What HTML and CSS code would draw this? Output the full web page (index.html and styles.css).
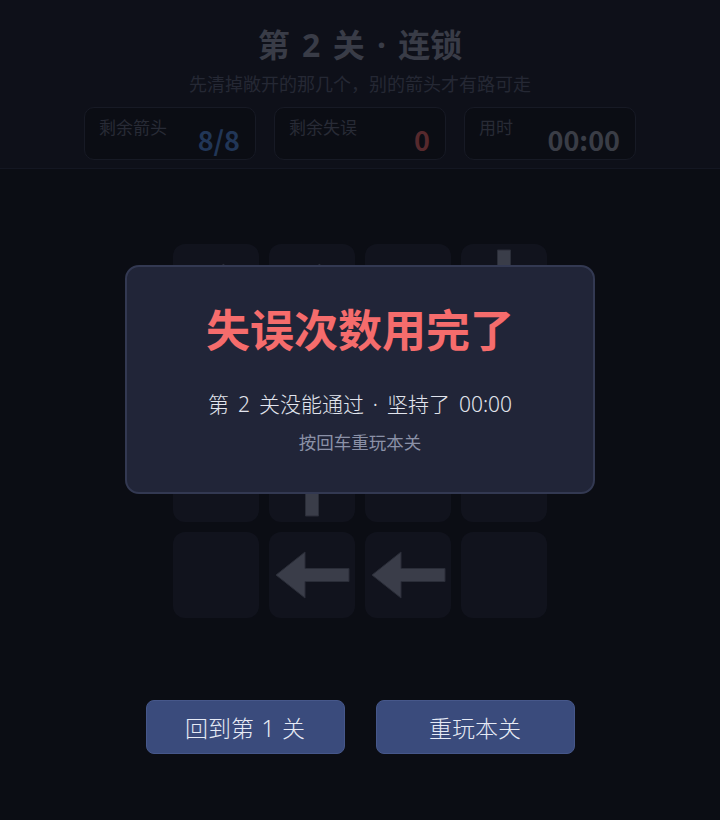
FILE: index.html
```html
<!DOCTYPE html>
<html lang="zh-CN">
<head>
<meta charset="utf-8">
<title>第 2 关 · 连锁</title>
<link rel="stylesheet" href="styles.css">
</head>
<body>
<div class="page">
  <header class="top">
    <h1 class="title">第 2 关 · 连锁</h1>
    <p class="subtitle">先清掉敞开的那几个，别的箭头才有路可走</p>
    <div class="stats">
      <div class="stat"><span class="stat-label">剩余箭头</span><span class="stat-value v-blue">8/8</span></div>
      <div class="stat"><span class="stat-label">剩余失误</span><span class="stat-value v-red">0</span></div>
      <div class="stat"><span class="stat-label">用时</span><span class="stat-value v-gray">00:00</span></div>
    </div>
  </header>

  <main class="board">
    <div class="grid">
      <div class="cell"><svg class="arrow right" viewBox="0 0 86 86"><path d="M7 43 L36 20 L36 36.5 L80 36.5 L80 49.5 L36 49.5 L36 66 Z"/></svg></div>
      <div class="cell"><svg class="arrow right" viewBox="0 0 86 86"><path d="M7 43 L36 20 L36 36.5 L80 36.5 L80 49.5 L36 49.5 L36 66 Z"/></svg></div>
      <div class="cell"></div>
      <div class="cell"><svg class="arrow down" viewBox="0 0 86 86"><path d="M7 43 L36 20 L36 36.5 L80 36.5 L80 49.5 L36 49.5 L36 66 Z"/></svg></div>

      <div class="cell"><svg class="arrow right" viewBox="0 0 86 86"><path d="M7 43 L36 20 L36 36.5 L80 36.5 L80 49.5 L36 49.5 L36 66 Z"/></svg></div>
      <div class="cell"></div>
      <div class="cell"><svg class="arrow up" viewBox="0 0 86 86"><path d="M7 43 L36 20 L36 36.5 L80 36.5 L80 49.5 L36 49.5 L36 66 Z"/></svg></div>
      <div class="cell"></div>

      <div class="cell"></div>
      <div class="cell"><svg class="arrow up" viewBox="0 0 86 86"><path d="M7 43 L36 20 L36 36.5 L80 36.5 L80 49.5 L36 49.5 L36 66 Z"/></svg></div>
      <div class="cell"></div>
      <div class="cell"></div>

      <div class="cell"></div>
      <div class="cell"><svg class="arrow left" viewBox="0 0 86 86"><path d="M7 43 L36 20 L36 36.5 L80 36.5 L80 49.5 L36 49.5 L36 66 Z"/></svg></div>
      <div class="cell"><svg class="arrow left" viewBox="0 0 86 86"><path d="M7 43 L36 20 L36 36.5 L80 36.5 L80 49.5 L36 49.5 L36 66 Z"/></svg></div>
      <div class="cell"></div>
    </div>
  </main>

  <div class="actions">
    <button class="btn">回到第 1 关</button>
    <button class="btn">重玩本关</button>
  </div>

  <div class="modal">
    <h2 class="modal-title">失误次数用完了</h2>
    <p class="modal-text">第 2 关没能通过 · 坚持了 00:00</p>
    <p class="modal-hint">按回车重玩本关</p>
  </div>
</div>
</body>
</html>
```

FILE: styles.css
```css
html, body {
  margin: 0;
  padding: 0;
}
body {
  background: #0b0d14;
  font-family: "Noto Sans CJK SC", "Noto Sans", sans-serif;
  width: 720px;
  height: 820px;
  overflow: hidden;
}
.page {
  position: relative;
  width: 720px;
  height: 820px;
}
.top {
  background: #0e1019;
  border-bottom: 1px solid #141722;
  height: 169px;
  box-sizing: border-box;
  padding-top: 24px;
  display: flex;
  flex-direction: column;
  align-items: center;
}
.title {
  margin: 0;
  font-family: "Noto Sans", "Noto Sans CJK SC", sans-serif;
  font-size: 32px;
  line-height: 42px;
  font-weight: 700;
  word-spacing: 4px;
  color: #393c47;
}
.subtitle {
  margin: 4px 0 0;
  font-size: 18px;
  line-height: 26px;
  color: #252834;
}
.stats {
  margin-top: 11px;
  display: flex;
  gap: 18px;
}
.stat {
  width: 172px;
  height: 53px;
  box-sizing: border-box;
  border: 1px solid #171a25;
  border-radius: 10px;
  background: #0b0d14;
  display: flex;
  justify-content: space-between;
  padding: 6px 15px 0 14px;
}
.stat-label {
  font-size: 17px;
  line-height: 26px;
  color: #282b36;
}
.stat-value {
  font-size: 27px;
  font-weight: 700;
  line-height: 36px;
  margin-top: 8px;
}
.v-blue { color: #213657; }
.v-red { color: #56292d; }
.v-gray { color: #3a3d46; }

.board {
  margin-top: 75px;
  display: flex;
  justify-content: center;
}
.grid {
  display: grid;
  grid-template-columns: repeat(4, 86px);
  grid-auto-rows: 86px;
  gap: 10px;
}
.cell {
  background: #11131d;
  border-radius: 12px;
}
.arrow {
  display: block;
  width: 86px;
  height: 86px;
}
.arrow path {
  fill: #3a3d49;
  stroke: #2a2d38;
  stroke-width: 1;
}
.arrow.left { transform: none; }
.arrow.right { transform: rotate(180deg); }
.arrow.up { transform: rotate(90deg); }
.arrow.down { transform: rotate(-90deg); }

.actions {
  margin-top: 82px;
  display: flex;
  justify-content: center;
  gap: 31px;
}
.btn {
  width: 199px;
  height: 54px;
  background: #3a4b7c;
  border: 1px solid #46578a;
  border-radius: 8px;
  color: #e6eaf5;
  font-family: "Noto Sans", "Noto Sans CJK SC", sans-serif;
  font-size: 23px;
  font-weight: 300;
  word-spacing: 1.5px;
  padding: 0;
}

.modal {
  position: absolute;
  top: 265px;
  left: 125px;
  width: 470px;
  height: 229px;
  box-sizing: border-box;
  background: #212538;
  border: 2px solid #333952;
  border-radius: 14px;
  display: flex;
  flex-direction: column;
  align-items: center;
  padding-top: 31px;
}
.modal-title {
  margin: 0;
  font-size: 44px;
  line-height: 60px;
  font-weight: 700;
  color: #f56c6c;
}
.modal-text {
  margin: 31px 0 0;
  font-family: "Noto Sans", "Noto Sans CJK SC", sans-serif;
  font-size: 21px;
  line-height: 30px;
  color: #e2e5ee;
  font-weight: 300;
  word-spacing: 3.5px;
}
.modal-hint {
  margin: 10px 0 0;
  font-size: 17.5px;
  line-height: 26px;
  color: #8b91a7;
}
```
